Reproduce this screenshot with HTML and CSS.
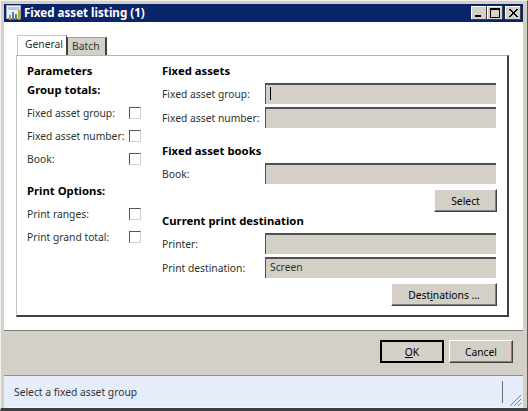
FILE: index.html
```html
<!DOCTYPE html>
<html lang="en">
<head>
  <meta charset="UTF-8">
  <title>Fixed asset listing (1)</title>
  <link rel="stylesheet" href="styles.css">
</head>
<body>
  <div class="window">
    <div class="titlebar">
      <svg class="app-icon" width="16" height="16" viewBox="0 0 16 16">
        <rect x="0.5" y="0.5" width="14" height="13" fill="#e8eef8" stroke="#9aa6c4"/>
        <rect x="2" y="2" width="11" height="3" fill="#b9c8e6"/>
        <rect x="3" y="10" width="2" height="5" fill="#e08a1e"/>
        <rect x="6" y="7" width="2" height="8" fill="#3f7fd0"/>
        <rect x="9" y="9" width="2" height="6" fill="#4c9a3a"/>
        <rect x="12" y="5" width="2" height="10" fill="#c9a227"/>
      </svg>
      <span class="title">Fixed asset listing (1)</span>
      <div class="controls">
        <button class="ctl"><svg width="16" height="14" viewBox="0 0 16 14"><rect x="4" y="9" width="6" height="2" fill="#000"/></svg></button>
        <button class="ctl"><svg width="16" height="14" viewBox="0 0 16 14"><path d="M3.5 2.5h9v9h-9z" fill="none" stroke="#000"/><rect x="3" y="2" width="10" height="2" fill="#000"/></svg></button>
        <button class="ctl ctl-close"><svg width="16" height="14" viewBox="0 0 16 14"><path d="M4 3l8 8M5 3l8 8M12 3l-8 8M13 3l-8 8" stroke="#000" fill="none"/></svg></button>
      </div>
    </div>

    <div class="client">
      <div class="tabs">
        <div class="tab active">General</div>
        <div class="tab">Batch</div>
      </div>
      <div class="panel">
        <div class="col-left">
          <h3>Parameters</h3>
          <h3 class="sub">Group totals:</h3>
          <div class="group">
            <label class="check-row">Fixed asset group:<span class="check"></span></label>
            <label class="check-row">Fixed asset number:<span class="check"></span></label>
            <label class="check-row">Book:<span class="check"></span></label>
          </div>
          <h3 class="options">Print Options:</h3>
          <div class="group">
            <label class="check-row">Print ranges:<span class="check"></span></label>
            <label class="check-row">Print grand total:<span class="check"></span></label>
          </div>
        </div>
        <div class="col-right">
          <h3>Fixed assets</h3>
          <div class="fields">
            <div class="field-row"><span>Fixed asset group:</span><div class="field"><i class="caret"></i></div></div>
            <div class="field-row"><span>Fixed asset number:</span><div class="field"></div></div>
          </div>
          <h3 class="books">Fixed asset books</h3>
          <div class="fields">
            <div class="field-row"><span>Book:</span><div class="field"></div></div>
          </div>
          <div class="actions"><button class="btn btn-select">Select</button></div>
          <h3 class="dest">Current print destination</h3>
          <div class="fields">
            <div class="field-row"><span>Printer:</span><div class="field"></div></div>
            <div class="field-row"><span>Print destination:</span><div class="field">Screen</div></div>
          </div>
          <div class="actions"><button class="btn btn-dest">Dest<u>i</u>nations ...</button></div>
        </div>
      </div>
    </div>

    <div class="button-bar">
      <button class="btn btn-ok default"><u>O</u>K</button>
      <button class="btn btn-cancel">Cancel</button>
    </div>

    <div class="statusbar">
      <span class="status-text">Select a fixed asset group</span>
      <span class="status-sep"></span>
      <svg class="grip" width="12" height="11" viewBox="0 0 12 11"><path d="M0 11L11 0M4 11L11 4M8 11l3-3" stroke="#808080" fill="none"/></svg>
    </div>
  </div>
</body>
</html>
```

FILE: styles.css
```css
/* ---------- Window ---------- */
*{box-sizing:border-box;margin:0;padding:0;}

body{
  font-family:"Noto Sans","DejaVu Sans",sans-serif;
  font-size:10.3px;
  color:#2c332c;
  background:#d4d0c8;
}

.window{
  width:528px;
  height:411px;
  display:flex;
  flex-direction:column;
  background:#d4d0c8;
  padding:3px 4px 0 3px;
  border-left:1px solid #f2f0ec;
  border-top:1px solid #f2f0ec;
  border-right:1px solid #5a5a5a;
  border-bottom:3px solid #404040;
}

.titlebar{
  height:18px;
  display:flex;
  align-items:center;
  padding-left:2px;
  background:#0a246a;
}
.app-icon{flex:none;}
.title{
  margin-left:2px;
  color:#fff;
  font-weight:700;
  font-size:11.6px;
  line-height:18px;
}
.controls{
  margin-left:auto;
  margin-right:2px;
  display:flex;
}
.ctl{
  width:16px;
  height:14px;
  background:#d4d0c8;
  border:none;
  box-shadow:inset -1px -1px 0 #404040,inset 1px 1px 0 #fff;
  display:block;
}
.ctl svg{display:block;}
.ctl-close{margin-left:2px;}

/* ---------- Client area ---------- */
.client{
  height:309px;
  background:#fff;
  padding:13px 0 0 12px;
  border-bottom:1px solid #808080;
}

.tabs{
  height:20px;
  display:flex;
  align-items:flex-end;
  padding-left:1px;
}
.tab{
  height:18px;
  width:40px;
  padding-left:4px;
  line-height:17px;
  background:#d4d0c8;
  border-left:1px solid #404040;
  border-right:2px solid #404040;
  border-top:1px solid #a0a0a0;
}
.tab.active{
  height:20px;
  width:50px;
  padding-left:7px;
  background:#fff;
  border-left:1px solid #c8c8c0;
  border-right:1px solid #404040;
  border-top:1px solid #c8c8c0;
}

.panel{
  width:493px;
  height:262px;
  display:flex;
  padding:7px 11px 0 10px;
  border-top:1px solid #b4b4b0;
  border-left:1px solid #c4c8c0;
  border-right:2px solid #404040;
  border-bottom:2px solid #404040;
}

h3{
  height:16px;
  line-height:16px;
  font-size:11.3px;
  font-weight:700;
  color:#000;
}

/* ---------- Left column ---------- */
.col-left{
  width:135px;
  flex:none;
}
.sub{margin-top:3px;}
.group{margin-top:3px;}
.options{margin-top:13px;}

.check-row{
  height:23px;
  width:114px;
  display:flex;
  align-items:center;
  justify-content:space-between;
  white-space:nowrap;
}
.check{
  width:12px;
  height:12px;
  flex:none;
  border-top:1px solid #555;
  border-left:1px solid #555;
  border-right:1px solid #d0d0d0;
  border-bottom:1px solid #d0d0d0;
  background:#fff;
}

/* ---------- Right column ---------- */
.col-right{
  flex:1;
}
.fields{
  margin-top:4px;
  display:flex;
  flex-direction:column;
  gap:3px;
}
.field-row{
  height:21px;
  display:flex;
  align-items:center;
  justify-content:space-between;
}
.field{
  width:231px;
  height:21px;
  padding-left:4px;
  line-height:17px;
  background:#d4d0c8;
  border-top:2px solid #505050;
  border-left:1px solid #505050;
  position:relative;
}
.caret{
  position:absolute;
  left:4px;
  top:2px;
  width:1px;
  height:13px;
  background:#000;
}
.books{margin-top:15px;}
.dest{margin-top:1px;}

.actions{
  margin-top:5px;
  display:flex;
  justify-content:flex-end;
  margin-right:-1px;
}

/* ---------- Buttons ---------- */
.btn{
  height:23px;
  font:inherit;
  color:#000;
  background:#d4d0c8;
  border:1px solid;
  border-color:#fff #404040 #404040 #fff;
  box-shadow:inset -1px -1px 0 #808080;
}
.btn-select{width:63px;}
.btn-dest{width:106px;}
.btn-ok,.btn-cancel{width:64px;}
.default{
  border:2px solid #000;
  box-shadow:none;
}

.button-bar{
  height:44px;
  display:flex;
  justify-content:flex-end;
  gap:5px;
  padding:9px 10px 0 0;
}

/* ---------- Status bar ---------- */
.statusbar{
  flex:1;
  display:flex;
  align-items:center;
  padding-left:10px;
  background:#e6edfa;
  border-top:1px solid #8f8f9c;
  border-bottom:1px solid #f4f4f4;
  position:relative;
}
.status-text{color:#333;}
.status-sep{
  margin-left:auto;
  margin-right:20px;
  width:1px;
  height:22px;
  background:#6a7080;
}
.grip{
  position:absolute;
  right:1px;
  bottom:1px;
}
```
